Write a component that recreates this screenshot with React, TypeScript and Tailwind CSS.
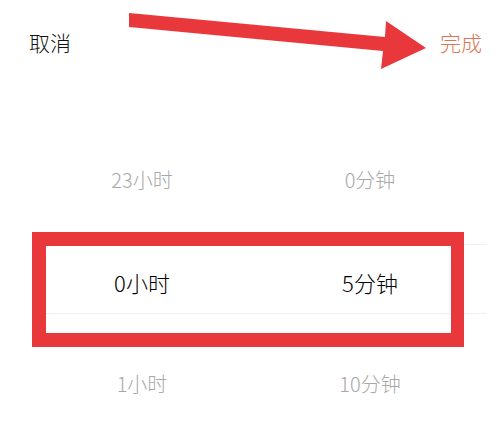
import React from "react";

type Column = { values: string[]; selected: number };

const columns: Column[] = [
  { values: ["23小时", "0小时", "1小时"], selected: 1 },
  { values: ["0分钟", "5分钟", "10分钟"], selected: 1 },
];

const font = { fontFamily: '"Noto Sans CJK SC", "Noto Sans", sans-serif' };

export default function App() {
  return (
    <div className="relative w-[502px] h-[429px] overflow-hidden bg-white" style={font}>
      {/* toolbar */}
      <div className="flex h-[86px] items-center justify-between pl-[29px] pr-[20px] text-[21px] font-light">
        <button className="text-[#111111]">取消</button>
        <button className="text-[#dc7352]">完成</button>
      </div>

      {/* wheel picker */}
      <div className="relative mt-[43px] pl-[28px] pr-[18px]">
        <div className="pointer-events-none absolute left-[32px] right-[15px] top-[115px] h-[70px] border-y border-[#efefef]" />
        <div className="grid grid-cols-2">
          {columns.map((col, ci) => (
            <div key={ci} className="flex flex-col">
              {col.values.map((v, i) => (
                <div
                  key={v}
                  className={`flex h-[102px] items-center justify-center font-light ${
                    i === col.selected ? "text-[22px] text-black" : "text-[20px] text-[#a8a8a8]"
                  }`}
                >
                  {v}
                </div>
              ))}
            </div>
          ))}
        </div>
      </div>

      {/* highlight frame around the selected row */}
      <div className="pointer-events-none absolute left-[32px] top-[232px] h-[115px] w-[432px] border-[14px] border-r-[13px] border-[#e8383b]" />

      {/* arrow pointing at the confirm button */}
      <svg className="pointer-events-none absolute left-0 top-0" width="502" height="100" viewBox="0 0 502 100">
        <polygon
          points="129,13 385,37 386,21 426,48 381,69 383,51 129,27"
          fill="#e8383b"
        />
      </svg>
    </div>
  );
}
